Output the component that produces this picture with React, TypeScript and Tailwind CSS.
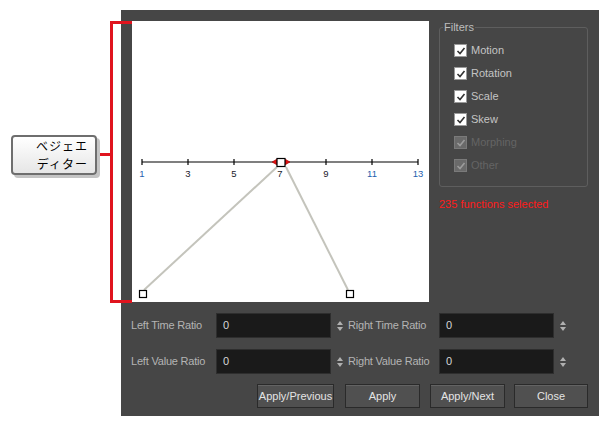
const font = { fontFamily: '"Liberation Sans", Arial, sans-serif' };

const filters = [
  { label: "Motion", enabled: true },
  { label: "Rotation", enabled: true },
  { label: "Scale", enabled: true },
  { label: "Skew", enabled: true },
  { label: "Morphing", enabled: false },
  { label: "Other", enabled: false },
];

const ticks = [1, 3, 5, 7, 9, 11, 13];

function Check({ enabled }: { enabled: boolean }) {
  return (
    <div
      className={`w-[13px] h-[13px] flex items-center justify-center border ${
        enabled ? "bg-white border-[#9a9a9a]" : "bg-[#6a6a6a] border-[#7a7a7a]"
      }`}
    >
      <svg width="10" height="10" viewBox="0 0 10 10">
        <path
          d="M1.5 5 L4 7.5 L8.5 2"
          fill="none"
          stroke={enabled ? "#333333" : "#9c9c9c"}
          strokeWidth="1.6"
        />
      </svg>
    </div>
  );
}

function Spinner() {
  return (
    <svg width="6" height="10" viewBox="0 0 6 10" className="mx-auto">
      <path d="M0 4 L3 0 L6 4 Z" fill="#b0b0b0" />
      <path d="M0 6 L3 10 L6 6 Z" fill="#b0b0b0" />
    </svg>
  );
}

function Field({ label }: { label: string }) {
  return (
    <>
      <span className="text-[11px] text-[#b4b4b4] whitespace-nowrap tracking-[-0.2px]">{label}</span>
      <div className="h-[25px] bg-[#1a1a1a] border border-[#2e2e2e] flex items-center pl-[6px] text-[11px] text-[#d6d6d6]">
        0
      </div>
      <Spinner />
    </>
  );
}

function Button({ label, w }: { label: string; w: string }) {
  return (
    <button
      className={`${w} h-[24px] bg-[#505050] border border-[#2a2a2a] shadow-[inset_0_1px_0_#636363] text-[11px] text-[#e4e4e4]`}
    >
      {label}
    </button>
  );
}

function Curve() {
  return (
    <svg width="297" height="281" viewBox="0 0 297 281">
      <line x1="10" y1="141" x2="286" y2="141" stroke="#000" strokeWidth="1.2" />
      {ticks.map((t, i) => (
        <g key={t}>
          <line x1={10 + i * 46} y1="138" x2={10 + i * 46} y2="144" stroke="#000" strokeWidth="1.2" />
          <text
            x={10 + i * 46}
            y="156"
            textAnchor="middle"
            fontSize="9.5"
            fontFamily="Liberation Sans, Arial, sans-serif"
            fill={t === 1 || t >= 11 ? "#1e5fae" : "#1a1a2a"}
          >
            {t}
          </text>
        </g>
      ))}
      <polyline points="12,269 145,146" fill="none" stroke="#c4c4bc" strokeWidth="2" />
      <polyline points="154,146 216,269" fill="none" stroke="#c4c4bc" strokeWidth="2" />
      <path d="M140 141 L145 138 L145 144 Z" fill="#e01010" stroke="#900" strokeWidth="0.5" />
      <path d="M158 141 L153 138 L153 144 Z" fill="#e01010" stroke="#900" strokeWidth="0.5" />
      <rect x="145" y="137.5" width="8" height="8" fill="#fff" stroke="#000" strokeWidth="1.2" />
      <rect x="7.5" y="269.5" width="7" height="7" fill="#fff" stroke="#000" strokeWidth="1.2" />
      <rect x="214.5" y="269.5" width="7" height="7" fill="#fff" stroke="#000" strokeWidth="1.2" />
    </svg>
  );
}

export default function App() {
  return (
    <div className="w-[609px] h-[426px] bg-white flex pt-[10px]" style={font}>
      {/* Callout */}
      <div className="w-[121px] h-[406px] relative shrink-0">
        <div className="absolute left-[110px] top-[11px] w-[22px] h-[282px] border-[3px] border-r-0 border-[#e0141e] z-10" />
        <div className="absolute left-[96px] top-[143px] w-[15px] h-[3px] bg-[#e0141e]" />
        <div
          className="absolute left-[11px] top-[125px] w-[86px] h-[40px] rounded-[4px] border-2 border-[#6e6e6e] bg-gradient-to-b from-white to-[#e6e6e6] shadow-[3px_3px_0_#c4c4c4] flex flex-col items-end justify-center pr-[7px] text-[12px] leading-[18px] tracking-[1px] text-black"
          style={{ fontFamily: '"Noto Sans CJK JP", sans-serif' }}
        >
          <span className="leading-[18px]">ベジェエ</span>
          <span className="leading-[18px]">ディター</span>
        </div>
      </div>

      {/* Panel */}
      <div className="w-[478px] h-[406px] bg-[#464646] flex flex-col">
        <div className="flex pl-[11px] pt-[11px]">
          <div className="w-[297px] h-[281px] bg-white shrink-0">
            <Curve />
          </div>
          <div className="ml-[10px] flex flex-col">
            <div className="mt-[6px] w-[149px] h-[160px] border border-[#5e5e5e] rounded-[3px] relative pt-[16px] pl-[14px] flex flex-col gap-[10px]">
              <span className="absolute -top-[8px] left-[3px] px-[1px] bg-[#464646] text-[11px] text-[#bdbdbd] leading-[14px]">
                Filters
              </span>
              {filters.map((f) => (
                <div key={f.label} className="flex items-center gap-[4px] h-[13px]">
                  <Check enabled={f.enabled} />
                  <span className={`text-[11px] ${f.enabled ? "text-[#c4c4c4]" : "text-[#646464]"}`}>{f.label}</span>
                </div>
              ))}
            </div>
            <span className="mt-[10px] text-[11px] text-[#ff1a1a] leading-[14px]">235 functions selected</span>
          </div>
        </div>

        <div className="grid grid-cols-[85px_115px_17px_91px_115px_17px] items-center gap-y-[11px] pl-[10px] mt-[11px]">
          <Field label="Left Time Ratio" />
          <Field label="Right Time Ratio" />
          <Field label="Left Value Ratio" />
          <Field label="Right Value Ratio" />
        </div>

        <div className="flex justify-end pr-[11px] mt-[10px]">
          <Button label="Apply/Previous" w="w-[77px]" />
          <div className="w-[11px]" />
          <Button label="Apply" w="w-[75px]" />
          <div className="w-[10px]" />
          <Button label="Apply/Next" w="w-[75px]" />
          <div className="w-[9px]" />
          <Button label="Close" w="w-[74px]" />
        </div>
      </div>
    </div>
  );
}
